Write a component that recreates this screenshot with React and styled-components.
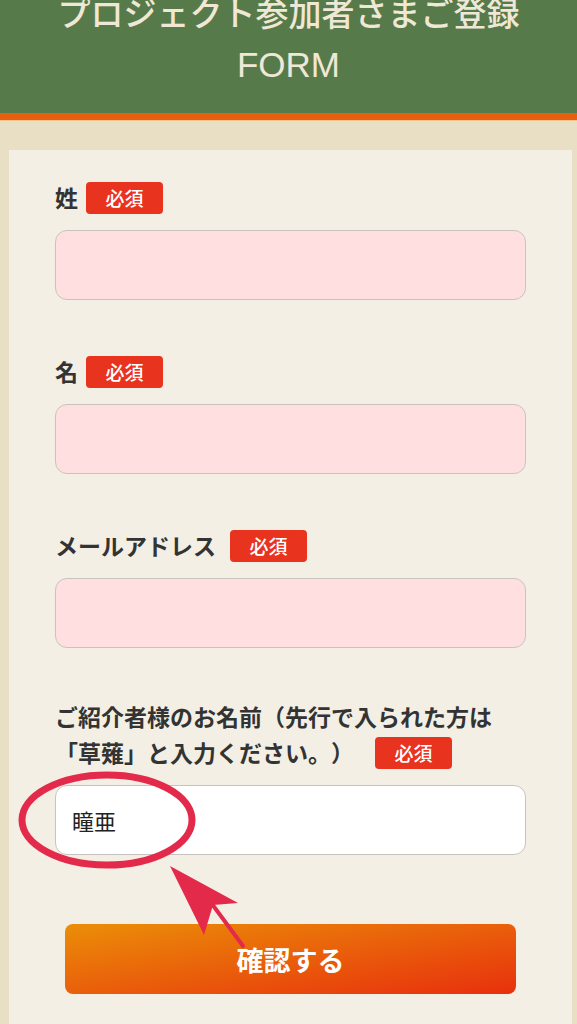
import React from 'react';
import styled, { createGlobalStyle } from 'styled-components';

const GlobalStyle = createGlobalStyle`
  body {
    margin: 0;
    background: #e8dfc4;
    font-family: "Noto Sans CJK JP", "Noto Sans", sans-serif;
    text-spacing-trim: space-all;
  }
`;

const Header = styled.header`
  height: 113px;
  background: #577a4b;
  border-bottom: 7px solid #e95f10;
  box-shadow: 0 1px 0 #f3c48c;
  overflow: hidden;
`;

const Title = styled.h1`
  margin: -10px 0 0;
  font-family: "Liberation Sans", "Noto Sans CJK JP", sans-serif;
  font-size: 33px;
  line-height: 50px;
  font-weight: 500;
  color: #efe8d6;
  text-align: center;
`;

const TitleLatin = styled.span`
  font-size: 35px;
  font-weight: 400;
`;

const Page = styled.main`
  padding: 30px 5px 0 9px;
`;

const Card = styled.section`
  background: #f3efe5;
  padding: 29px 46px 40px;
`;

const Field = styled.div`
  position: relative;
  margin-top: ${p => (p.$gap === undefined ? 53 : p.$gap)}px;
`;

const Label = styled.div`
  font-size: 23px;
  line-height: 36px;
  font-weight: 700;
  color: #333;
`;

const Badge = styled.span`
  display: inline-block;
  width: 77px;
  height: 32px;
  margin: 3px 0 0 ${p => p.$gap || 8}px;
  border-radius: 4px;
  background: #e8331f;
  color: #fff;
  font-size: 19px;
  font-weight: 500;
  line-height: 32px;
  text-align: center;
  vertical-align: top;
`;

const Input = styled.input`
  display: block;
  box-sizing: border-box;
  width: 100%;
  height: 70px;
  margin-top: 15px;
  padding: 0 16px;
  border: 1.5px solid #c9c3c0;
  border-radius: 12px;
  background: ${p => (p.$filled ? '#fff' : '#ffdfdf')};
  font-family: inherit;
  font-size: 22px;
  color: #222;
  outline: none;
`;

const Annotation = styled.svg`
  position: absolute;
  left: -55px;
  top: 0;
  width: 280px;
  height: 260px;
  pointer-events: none;
  z-index: 2;
`;

const Submit = styled.button`
  display: block;
  box-sizing: border-box;
  width: calc(100% - 20px);
  height: 70px;
  margin: 69px 10px 0;
  border: none;
  border-radius: 8px;
  background: linear-gradient(to bottom right, #eb8e08, #e8300d);
  color: #fff;
  font-family: inherit;
  font-size: 27px;
  font-weight: 700;
  cursor: pointer;
`;

const fields = [
  { label: '姓', gap: 0 },
  { label: '名' },
  { label: 'メールアドレス', badgeGap: 14 },
];

export default function App() {
  return (
    <>
      <GlobalStyle />
      <Header>
        <Title>
          プロジェクト参加者さまご登録
          <br />
          <TitleLatin>FORM</TitleLatin>
        </Title>
      </Header>
      <Page>
        <Card>
          {fields.map(f => (
            <Field key={f.label} $gap={f.gap}>
              <Label>
                {f.label}
                <Badge $gap={f.badgeGap}>必須</Badge>
              </Label>
              <Input type="text" />
            </Field>
          ))}
          <Field $gap={50}>
            <Label>
              ご紹介者様のお名前（先行で入られた方は
              <br />
              「草薙」と入力ください。）
              <Badge $gap={21}>必須</Badge>
            </Label>
            <Input type="text" $filled defaultValue="瞳亜" />
            <Annotation viewBox="0 0 280 260">
              <ellipse cx="107" cy="122" rx="85" ry="45" fill="none" stroke="#e42a4b" strokeWidth="7" />
              <line x1="212" y1="206" x2="243" y2="248" stroke="#e42a4b" strokeWidth="4" strokeLinecap="round" />
              <polygon points="170,168 238,205 213,207 204,237" fill="#e42a4b" />
            </Annotation>
          </Field>
          <Submit type="button">確認する</Submit>
        </Card>
      </Page>
    </>
  );
}
